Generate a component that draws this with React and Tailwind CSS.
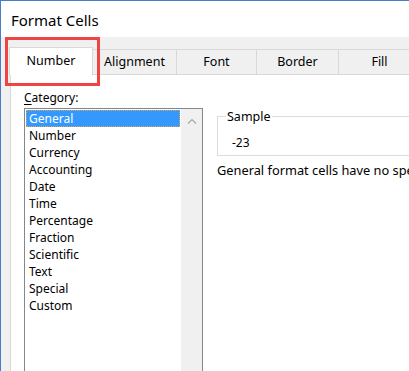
import React from "react";

const categories = [
  "General",
  "Number",
  "Currency",
  "Accounting",
  "Date",
  "Time",
  "Percentage",
  "Fraction",
  "Scientific",
  "Text",
  "Special",
  "Custom",
];

const tabs = [
  { label: "Alignment", w: "w-[84px]" },
  { label: "Font", w: "w-[80px]" },
  { label: "Border", w: "w-[82px]" },
  { label: "Fill", w: "w-[82px]" },
];

const App = () => {
  return (
    <div className="relative w-[409px] h-[371px] overflow-hidden bg-white border-t border-l border-[#4a7cc7] text-black font-['Noto_Sans','Open_Sans',sans-serif] text-[12px]">
      {/* Title */}
      <div className="h-[36px] pl-[10px] flex items-center text-[15px] pt-[2px]">Format Cells</div>

      {/* Body */}
      <div className="bg-[#f0f0f0] h-[335px] flex flex-col">
        {/* Tabs */}
        <div className="shrink-0 flex items-end h-[37px] pl-[8px]">
          <div className="relative z-10 -mb-px h-[28px] w-[84px] shrink-0 bg-white border-x border-t border-[#d9d9d9] flex items-center justify-center text-[12.5px]">
            Number
          </div>
          {tabs.map((t) => (
            <div
              key={t.label}
              className={`${t.w} h-[25px] shrink-0 border-t border-r border-[#d9d9d9] flex items-center justify-center text-[12.5px]`}
            >
              {t.label}
            </div>
          ))}
        </div>

        {/* Panel */}
        <div className="flex-1 min-h-0 ml-[9px] bg-white border-t border-l border-[#d9d9d9] flex pl-[13px]">
          {/* Category */}
          <div className="flex flex-col shrink-0">
            <div className="pt-[14px] leading-[17px]">
              <span className="underline underline-offset-2">C</span>ategory:
            </div>
            <div className="shrink-0 mt-[2px] w-[179px] h-[280px] border border-[#828790] flex">
              <div className="flex-1 p-px">
                {categories.map((c, i) => (
                  <div
                    key={c}
                    className={
                      i === 0
                        ? "h-[17px] leading-[16px] pl-[2px] bg-[#3399ff] text-white border border-dotted border-[#d9a35a]"
                        : "h-[17px] leading-[18px] pl-[3px]"
                    }
                  >
                    {c}
                  </div>
                ))}
              </div>
              <div className="w-[21px] bg-[#f0f0f0] flex justify-center pt-[9px]">
                <svg width="10" height="6" viewBox="0 0 10 6" fill="none">
                  <path d="M1 5.5 L5 1.5 L9 5.5" stroke="#a6a6a6" strokeWidth="1.2" />
                </svg>
              </div>
            </div>
          </div>

          {/* Sample */}
          <div className="ml-[14px] mt-[33px] flex flex-col shrink-0">
            <fieldset className="w-[220px] border border-[#dcdcdc] pb-[4px]">
              <legend className="ml-[8px] px-px leading-[17px] text-[12.5px]">Sample</legend>
              <div className="pl-[14px] pt-[9px] leading-[17px]">-23</div>
            </fieldset>
            <div className="mt-[6px] leading-[17px] whitespace-nowrap text-[12.8px]">
              General format cells have no specific number format.
            </div>
          </div>
        </div>
      </div>

      {/* Highlight annotation */}
      <div className="absolute left-[4px] top-[36px] w-[95px] h-[49px] border-[3px] border-[#ee4444] pointer-events-none" />
    </div>
  );
};

export default App;
